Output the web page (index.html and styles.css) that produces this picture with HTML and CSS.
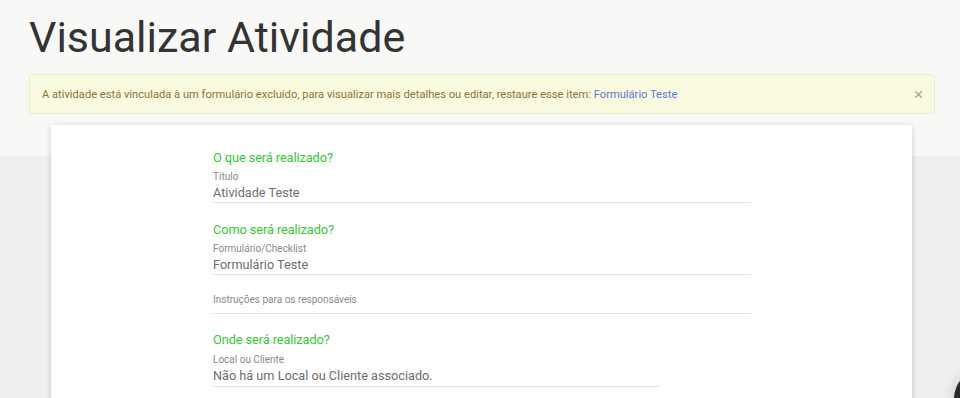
FILE: index.html
```html
<!DOCTYPE html>
<html lang="pt-BR">
<head>
<meta charset="utf-8">
<title>Visualizar Atividade</title>
<link rel="stylesheet" href="styles.css">
</head>
<body>
<div class="page">
  <header class="top">
    <h1 class="title">Visualizar Atividade</h1>
    <div class="alert">
      <span class="alert-text">A atividade está vinculada à um formulário excluído, para visualizar mais detalhes ou editar, restaure esse item: <a class="alert-link" href="#">Formulário Teste</a></span>
      <span class="alert-close">×</span>
    </div>
  </header>
  <main class="card">
    <div class="form">
      <h2 class="section">O que será realizado?</h2>
      <div class="field">
        <div class="label">Título</div>
        <div class="value">Atividade Teste</div>
      </div>

      <h2 class="section">Como será realizado?</h2>
      <div class="field">
        <div class="label">Formulário/Checklist</div>
        <div class="value">Formulário Teste</div>
      </div>
      <div class="field field-empty">
        <div class="label">Instruções para os responsáveis</div>
      </div>

      <h2 class="section">Onde será realizado?</h2>
      <div class="field field-short">
        <div class="label">Local ou Cliente</div>
        <div class="value">Não há um Local ou Cliente associado.</div>
      </div>
    </div>
  </main>
  <div class="fab"></div>
</div>
</body>
</html>
```
FILE: styles.css
```css
html, body {
  margin: 0;
  padding: 0;
}
body {
  font-family: Roboto, "Liberation Sans", Arial, sans-serif;
  background: #efefef;
  width: 960px;
  height: 398px;
  overflow: hidden;
}
.page {
  position: relative;
  height: 398px;
  overflow: hidden;
  background: linear-gradient(#f8f8f6 0, #f8f8f6 156px, #efefef 156px);
}
.top {
  padding: 8px 25px 0 29px;
}
.title {
  margin: 0;
  font-size: 43px;
  line-height: 58px;
  font-weight: 400;
  color: #333;
}
.alert {
  margin-top: 8px;
  height: 38px;
  display: flex;
  align-items: center;
  justify-content: space-between;
  padding: 0 12px;
  background: #f9fadf;
  border: 1px solid #eeedc0;
  border-radius: 3px;
}
.alert-text {
  font-size: 11.15px;
  color: #8d7339;
}
.alert-link {
  color: #5a78dc;
  text-decoration: none;
}
.alert-close {
  color: #b0ad98;
  font-size: 17px;
  line-height: 1;
  margin-right: -1px;
}
.card {
  margin: 11px 48px 0 51px;
  background: #fff;
  box-shadow: 0 1px 6px rgba(0, 0, 0, 0.18);
  height: 300px;
  padding: 24px 0 0 162px;
}
.form {
  width: 538px;
}
.section {
  margin: 0;
  font-size: 12.8px;
  line-height: 18px;
  font-weight: 400;
  color: #38c838;
  letter-spacing: -0.1px;
}
.field {
  margin-top: 3px;
  margin-bottom: 18px;
  border-bottom: 1px solid #e4e4e4;
}
.label {
  font-size: 10px;
  line-height: 14px;
  color: #8a8a8a;
}
.value {
  font-size: 12.7px;
  line-height: 16px;
  padding-top: 1px;
  padding-bottom: 1px;
  color: #6e6e6e;
}
.field-empty {
  margin-top: 6px;
  padding-bottom: 6px;
  margin-bottom: 17px;
}
.field-short {
  width: 447px;
  margin-top: 4px;
}
.field-short .value {
  padding-bottom: 2px;
}
.fab {
  position: absolute;
  left: 954px;
  top: 368px;
  width: 62px;
  height: 62px;
  border-radius: 50%;
  background: #2a2a2a;
  box-shadow: 0 0 10px 4px rgba(0, 0, 0, 0.08);
}
```
